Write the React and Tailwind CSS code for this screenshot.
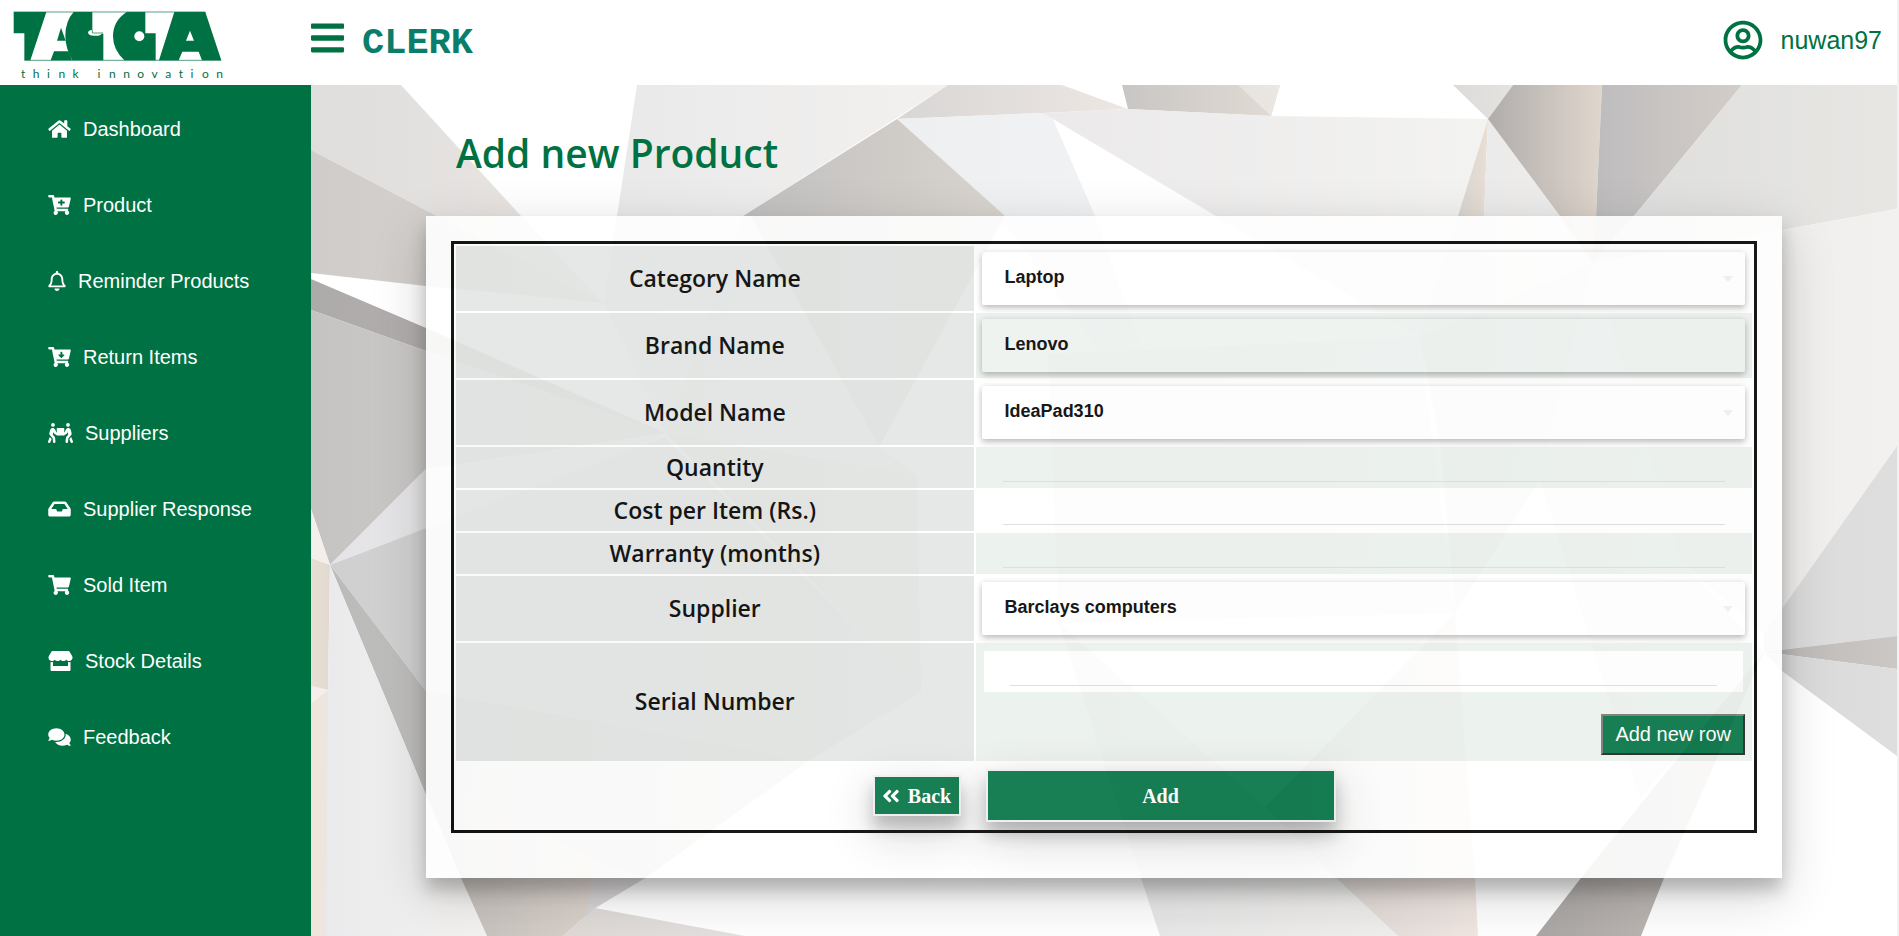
import React from "react";
import {
  FaAngleDoubleLeft,
  FaBars,
  FaCartArrowDown,
  FaCartPlus,
  FaComments,
  FaHome,
  FaInbox,
  FaPeopleCarry,
  FaRegBell,
  FaRegUserCircle,
  FaShoppingCart,
  FaStore,
} from "react-icons/fa";

const navItems = [
  { label: "Dashboard", icon: FaHome, width: "w-[23px]" },
  { label: "Product", icon: FaCartPlus, width: "w-[23px]" },
  { label: "Reminder Products", icon: FaRegBell, width: "w-[18px]" },
  { label: "Return Items", icon: FaCartArrowDown, width: "w-[23px]" },
  { label: "Suppliers", icon: FaPeopleCarry, width: "w-[25px]" },
  { label: "Supplier Response", icon: FaInbox, width: "w-[23px]" },
  { label: "Sold Item", icon: FaShoppingCart, width: "w-[23px]" },
  { label: "Stock Details", icon: FaStore, width: "w-[25px]" },
  { label: "Feedback", icon: FaComments, width: "w-[23px]" },
];

const fields = [
  { id: "category", label: "Category Name", options: ["Laptop"] },
  { id: "brand", label: "Brand Name", options: ["Lenovo"] },
  { id: "model", label: "Model Name", options: ["IdeaPad310"] },
  { id: "quantity", label: "Quantity" },
  { id: "cost", label: "Cost per Item (Rs.)" },
  { id: "warranty", label: "Warranty (months)" },
  { id: "supplier", label: "Supplier", options: ["Barclays computers"] },
];

/* Facets of the low-poly backdrop: points, start colour, end colour (left to right). */
const facets = [
  ["311,85 401,85 521,216 604,303 437,216 311,150", "#dfdedd", "#eae6e3"],
  ["311,150 437,216 604,303 426,286 311,273", "#cfccca", "#d9d4cf"],
  ["637,85 948,85 743,216 665,433 604,303 617,216", "#eae9ea", "#f2f1ef"],
  ["948,85 1062,85 1128,109 1043,113 897,119", "#d8d6d5", "#ede7e3"],
  ["1122,85 1280,85 1271,116 1128,109", "#c8c6c4", "#e2dbd4"],
  ["1238,85 1280,85 1271,116", "#e6e2de", "#ebe7e3"],
  ["897,119 1043,113 1053,119 1095,216 1180,460 1010,230", "#edeff1", "#f2f3f4"],
  ["1043,113 1128,109 1271,116 1488,119 1458,216 1419,337 1216,216 1053,119", "#ebe9ea", "#f3f3f1"],
  ["897,119 1005,216 879,447 751,217 743,216", "#c1c0c0", "#d9d4ce"],
  ["751,217 879,447 917,475 665,433 743,216", "#e4e4e3", "#ecebe9"],
  ["1453,85 1513,85 1488,119", "#dcdbda", "#e5e3e0"],
  ["1488,119 1484,216 1458,216", "#d8d4d0", "#e8dfd5"],
  ["1488,119 1560,216 1592,263 1419,337 1458,216 1484,216", "#eae9e9", "#eeedec"],
  ["1488,119 1513,85 1602,85 1596,216 1592,263 1560,216", "#b0adac", "#e0d6cc"],
  ["1602,85 1742,85 1634,216 1592,263 1596,216", "#bdbcbd", "#d3cdc8"],
  ["1742,85 1897,85 1897,209 1782,230 1592,263 1634,216", "#dedede", "#e7e6e3"],
  ["1592,263 1782,230 1897,209 1897,446 1764,634 1680,560", "#ecebeb", "#f2f1ef"],
  ["1419,337 1592,263 1540,480 1455,613 1440,440", "#e4e3e2", "#ebeae8"],
  ["1048,354 1419,337 1455,613 1059,623", "#eeeceb", "#f3f2f0"],
  ["1592,263 1680,560 1764,652 1640,798 1540,480", "#f0efef", "#f4f3f2"],
  ["1764,652 1764,634 1897,446 1897,636", "#dbdbdb", "#dedede"],
  ["1764,652 1897,636 1897,669", "#bbb8b7", "#cbc7c4"],
  ["1764,652 1897,669 1897,756 1782,671", "#d9d9da", "#dedede"],
  ["311,279 426,328 665,433 426,351 311,310", "#adaaaa", "#bab6b3"],
  ["311,310 426,351 665,433 426,469 330,565 311,509", "#c5c4c3", "#d5d1cb"],
  ["330,565 426,469 665,433 560,490 426,528", "#e4e3e5", "#ebebec"],
  ["330,565 426,528 665,437 921,692 810,760 426,691", "#d0cfd0", "#dedddc"],
  ["330,565 426,691 810,760 645,878 461,878 426,795", "#babaB9", "#d6d3d0"],
  ["665,433 917,475 921,692", "#d9d7d4", "#e0deda"],
  ["311,509 330,565 311,558", "#f5efec", "#f3eeeb"],
  ["311,558 330,565 328,690 311,686", "#e9dfd3", "#e1d9d0"],
  ["311,686 328,690 311,703", "#f4eeec", "#f4eeec"],
  ["311,703 328,690 328,936 311,936", "#f1e6d9", "#ebe6e2"],
  ["330,565 426,795 461,878 487,936 326,936 328,690", "#eaeaec", "#f4f3f1"],
  ["461,878 440,780 593,860 645,878 595,908 563,936 487,936", "#c2beba", "#e3dad1"],
  ["593,870 645,878 595,908 585,920", "#d6d4d4", "#dad8d8"],
  ["595,908 745,936 563,936", "#dfdad6", "#e4e1e1"],
  ["1059,623 1265,807 1336,878 1398,936 1160,936 1141,878", "#e5e5e6", "#f0efed"],
  ["1455,613 1475,878 1478,936 1398,936 1336,878 1265,807", "#d6d3d1", "#f1e7e2"],
  ["1764,652 1664,878 1641,936 1536,936 1581,878", "#aaa7a6", "#cbc3bd"],
];

function Backdrop() {
  return (
    <svg
      aria-hidden="true"
      className="absolute inset-0 h-full w-full bg-white"
      viewBox="311 85 1586 851"
      preserveAspectRatio="xMidYMid slice"
    >
      <defs>
        {facets.map(([, from, to], i) => (
          <linearGradient key={i} id={`facet-${i}`}>
            <stop offset="0" stopColor={from} />
            <stop offset="1" stopColor={to} />
          </linearGradient>
        ))}
      </defs>
      {facets.map(([points], i) => (
        <polygon key={i} points={points} fill={`url(#facet-${i})`} />
      ))}
    </svg>
  );
}

function Logo() {
  return (
    <a href="#" aria-label="TAGGA think innovation" className="block w-[210px] text-[#007142]">
      <svg aria-hidden="true" viewBox="40 34 630 152" className="block w-full">
        <g fill="currentColor">
          <polygon points="42,37 140,37 92,182 74,182 74,101 42,101" />
          <polygon points="184,84 198,123 172,123" />
          <polygon points="163,155 207,155 217,182 153,182" />
          <path d="M222 37H278V90Q265 92 265 99Q267 108 283 108H296Q304 107 306 102H311V182H218Q197 145 197 108Q197 64 222 37Z" />
          <path d="M381 37H437V101H468V182H374Q340 150 340 110Q340 64 381 37Z" />
          <path
            fillRule="evenodd"
            d="M524 37H617L665 182H607L597 156H548L537 182H478ZM571 93L559 123H583Z"
          />
        </g>
        <circle cx="419" cy="110" r="15" fill="#fff" />
        <path
          d="M42 37H617M74 182H665M278 90V100H310"
          fill="none"
          stroke="currentColor"
          strokeWidth="2"
        />
      </svg>
      <span aria-hidden="true" className="mt-1 flex justify-between pl-2 font-['Lato',sans-serif] text-xs leading-4">
        {Array.from("think innovation").map((letter, i) => (
          <span key={i} className="min-w-1">{letter}</span>
        ))}
      </span>
    </a>
  );
}

function SelectField({ id, options }) {
  return (
    <div className="relative">
      <select
        id={id}
        className="block h-[53px] w-full appearance-none rounded-xs bg-white/10 px-[23px] pb-1 font-['Liberation_Sans',Arial,sans-serif] text-lg font-bold text-black shadow-[0_3px_6px_rgba(0,0,0,0.26),0_0_6px_rgba(0,0,0,0.08)]"
      >
        {options.map((option) => (
          <option key={option}>{option}</option>
        ))}
      </select>
      <svg
        aria-hidden="true"
        viewBox="0 0 10 6"
        className="pointer-events-none absolute top-6 right-3 w-[10px] fill-[#ebf1ed]"
      >
        <polygon points="0,0 10,0 5,6" />
      </svg>
    </div>
  );
}

function LineInput({ id }) {
  return (
    <input
      id={id}
      type="text"
      className="block h-7 w-full border-b border-[#d9dddb] bg-transparent px-1 font-['Liberation_Sans',Arial,sans-serif] text-lg outline-none"
    />
  );
}

function HeadCell({ htmlFor, children }) {
  return (
    <th className="bg-[#e3e6e4] px-0 pt-0 pb-[2px] font-['Open_Sans','Trebuchet_MS',sans-serif] text-[23px] leading-7 font-semibold">
      <label htmlFor={htmlFor}>{children}</label>
    </th>
  );
}

function ProductForm() {
  return (
    <form
      onSubmit={(event) => event.preventDefault()}
      className="mx-[115px] bg-white px-[25px] pt-[25px] pb-[45px] opacity-90 shadow-[0_12px_16px_rgba(0,0,0,0.24),0_17px_50px_rgba(0,0,0,0.19)]"
    >
      <table className="w-full table-fixed border-separate border-spacing-[2px] border-3 border-black">
        <colgroup>
          <col className="w-[40%]" />
          <col />
        </colgroup>
        <tbody className="text-black">
          {fields.map(({ id, label, options }) => (
            <tr key={id} className="group">
              <HeadCell htmlFor={id}>{label}</HeadCell>
              {options ? (
                <td className="py-[6px] pr-[7px] pl-[6px] group-even:bg-[#ebf1ed]">
                  <SelectField id={id} options={options} />
                </td>
              ) : (
                <td className="px-[27px] pt-[7px] pb-[6px] group-even:bg-[#ebf1ed]">
                  <LineInput id={id} />
                </td>
              )}
            </tr>
          ))}
          <tr>
            <HeadCell htmlFor="serial">Serial Number</HeadCell>
            <td className="bg-[#ebf1ed] pt-2 pr-[7px] pb-[6px] pl-[6px]">
              <div className="mx-[2px] bg-white px-[26px] pt-[7px] pb-[6px]">
                <LineInput id="serial" />
              </div>
              <div className="mt-[22px] flex justify-end">
                <button
                  type="button"
                  className="h-[41px] border-2 border-t-[#767676] border-r-[#202020] border-b-[#202020] border-l-[#767676] bg-[#007142] px-3 pb-[2px] font-['Liberation_Sans',Arial,sans-serif] text-xl leading-6 text-white"
                >
                  Add new row
                </button>
              </div>
            </td>
          </tr>
          <tr>
            <td colSpan={2} className="p-[6px]">
              <div className="flex items-center justify-center gap-[25px] font-['Liberation_Serif','Times_New_Roman',serif] text-xl font-bold text-white">
                <button
                  type="button"
                  className="flex h-[41px] w-[88px] items-center justify-center gap-2 border-2 border-[#eeeeee] bg-[#007142] shadow-[0_12px_16px_rgba(0,0,0,0.24),0_17px_50px_rgba(0,0,0,0.19)]"
                >
                  <FaAngleDoubleLeft className="h-5 w-[18px]" />
                  Back
                </button>
                <button
                  type="submit"
                  className="h-[53px] w-[350px] border-2 border-[#eeeeee] bg-[#007142] shadow-[0_12px_16px_rgba(0,0,0,0.24),0_17px_50px_rgba(0,0,0,0.19)]"
                >
                  Add
                </button>
              </div>
            </td>
          </tr>
        </tbody>
      </table>
    </form>
  );
}

export default function App() {
  return (
    <div className="flex min-h-screen flex-col border-r-2 border-[#f1f1f1] bg-white font-['Liberation_Sans',Arial,sans-serif]">
      <header className="flex h-[85px] items-start text-[#007142]">
        <div className="w-[311px] shrink-0 pt-[11px] pl-[13px]">
          <Logo />
        </div>
        <button type="button" aria-label="Toggle menu" className="mt-[19px]">
          <FaBars className="h-[38px] w-[33px]" />
        </button>
        <span className="mt-[22px] ml-[18px] font-['Courier_New','Liberation_Mono',monospace] text-[37px] leading-[42px] font-bold text-[#0a7d6b]">
          CLERK
        </span>
        <a href="#" className="mt-5 mr-[15px] ml-auto flex items-center gap-[18px] text-[25px] leading-10">
          <FaRegUserCircle className="size-10" />
          nuwan97
        </a>
      </header>
      <div className="flex flex-1">
        <nav className="w-[311px] shrink-0 bg-[#007142] pt-[6px] pl-12">
          <ul>
            {navItems.map(({ label, icon: Icon, width }) => (
              <li key={label}>
                <a href="#" className="flex h-[76px] items-center gap-3 text-xl text-white">
                  <Icon className={`h-5 shrink-0 ${width}`} />
                  {label}
                </a>
              </li>
            ))}
          </ul>
        </nav>
        <main className="relative min-w-0 flex-1 overflow-hidden">
          <Backdrop />
          <div className="relative pb-14">
            <h1 className="pt-9 pb-[31px] pl-[145px] font-['Open_Sans','Trebuchet_MS',sans-serif] text-[39px] leading-[64px] font-semibold text-[#007142]">
              Add new Product
            </h1>
            <ProductForm />
          </div>
        </main>
      </div>
    </div>
  );
}
